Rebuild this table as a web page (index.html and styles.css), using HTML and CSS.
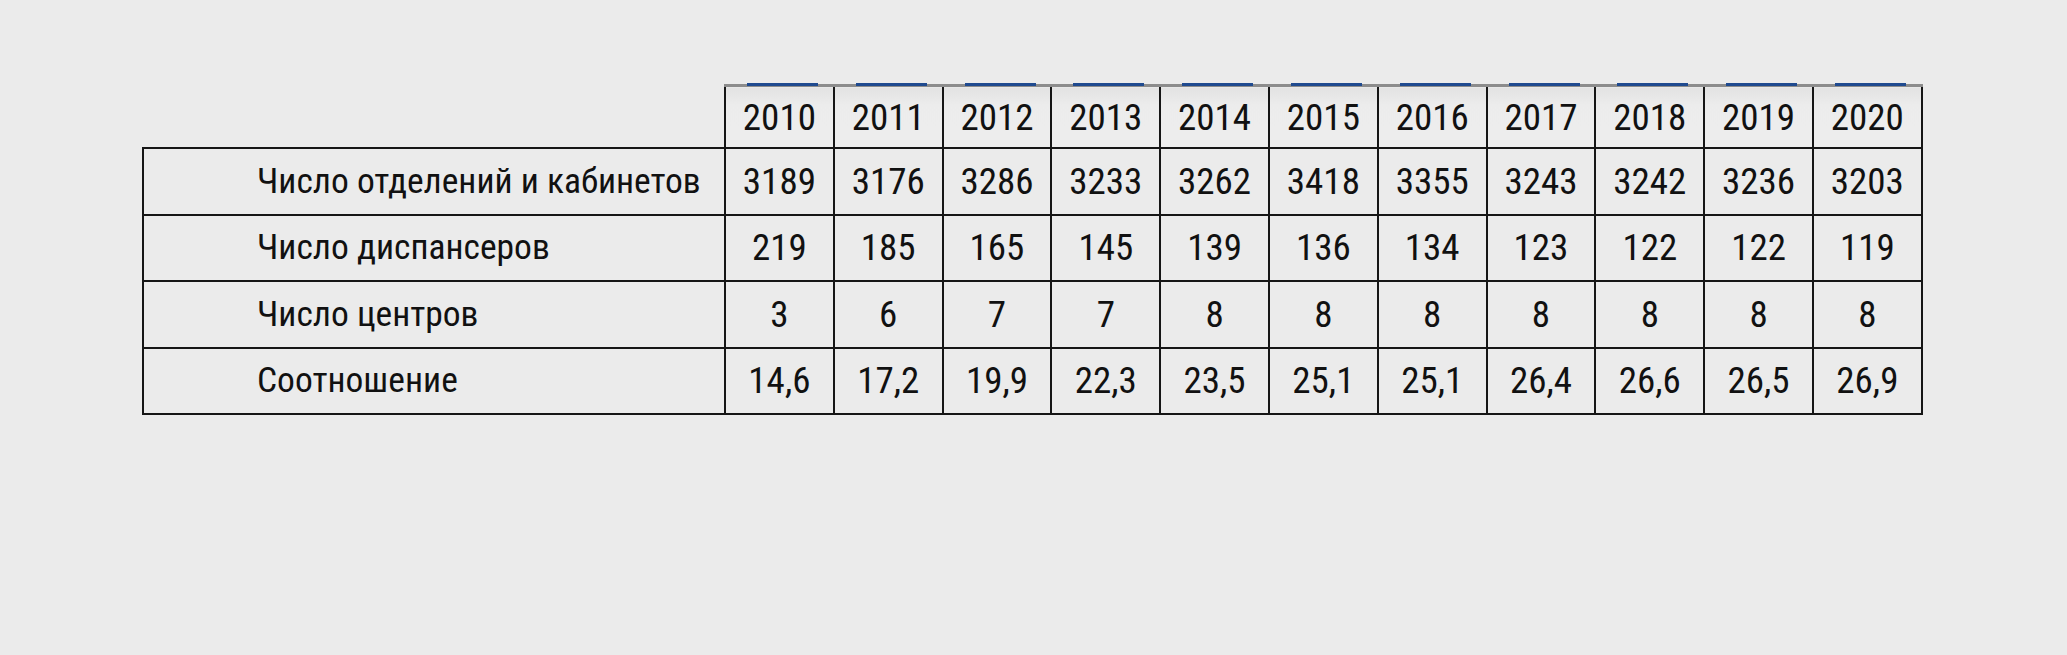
FILE: index.html
```html
<!DOCTYPE html>
<html lang="ru">
<head>
<meta charset="utf-8">
<title>Таблица</title>
<link rel="stylesheet" href="styles.css">
</head>
<body>
<div class="page">
  <table class="stats">
    <colgroup>
      <col class="col-label">
      <col class="col-year"><col class="col-year"><col class="col-year"><col class="col-year">
      <col class="col-year"><col class="col-year"><col class="col-year"><col class="col-year">
      <col class="col-year"><col class="col-year"><col class="col-year">
    </colgroup>
    <thead>
      <tr>
        <th class="corner"></th>
        <th class="year">2010</th><th class="year">2011</th><th class="year">2012</th><th class="year">2013</th>
        <th class="year">2014</th><th class="year">2015</th><th class="year">2016</th><th class="year">2017</th>
        <th class="year">2018</th><th class="year">2019</th><th class="year">2020</th>
      </tr>
    </thead>
    <tbody>
      <tr>
        <th class="label">Число отделений и кабинетов</th>
        <td>3189</td><td>3176</td><td>3286</td><td>3233</td><td>3262</td><td>3418</td>
        <td>3355</td><td>3243</td><td>3242</td><td>3236</td><td>3203</td>
      </tr>
      <tr>
        <th class="label">Число диспансеров</th>
        <td>219</td><td>185</td><td>165</td><td>145</td><td>139</td><td>136</td>
        <td>134</td><td>123</td><td>122</td><td>122</td><td>119</td>
      </tr>
      <tr>
        <th class="label">Число центров</th>
        <td>3</td><td>6</td><td>7</td><td>7</td><td>8</td><td>8</td>
        <td>8</td><td>8</td><td>8</td><td>8</td><td>8</td>
      </tr>
      <tr>
        <th class="label">Соотношение</th>
        <td>14,6</td><td>17,2</td><td>19,9</td><td>22,3</td><td>23,5</td><td>25,1</td>
        <td>25,1</td><td>26,4</td><td>26,6</td><td>26,5</td><td>26,9</td>
      </tr>
    </tbody>
  </table>
</div>
</body>
</html>
```
FILE: styles.css
```css
html, body {
  margin: 0;
  padding: 0;
  background: #ebebeb;
}

.page {
  padding: 84px 0 0 142px;
}

.stats {
  border-collapse: collapse;
  table-layout: fixed;
  width: 1779px;
  font-family: Roboto, "Open Sans", "Liberation Sans", sans-serif;
  font-stretch: 75%;
  font-size: 37px;
  color: #111;
}

.col-label { width: 582px; }
.col-year { width: 108.8px; }

.stats th,
.stats td {
  font-weight: normal;
  border: 2px solid #151515;
  padding: 0;
  height: 64.5px;
  text-align: center;
  vertical-align: middle;
  line-height: 1;
  white-space: nowrap;
}

.stats thead th {
  height: 60px;
}

.stats .corner {
  border-top: none;
  border-left: none;
}

.stats .year {
  position: relative;
  border-top: 3px solid #8c8c8c;
  background: linear-gradient(#e2e2e2, #ececec 30%, #ededed);
}

.stats .year::before {
  content: "";
  position: absolute;
  top: -4px;
  left: 21px;
  width: 71px;
  height: 3px;
  background: #1f4a8f;
}

.stats .label {
  text-align: left;
  padding-left: 113px;
  font-size: 35.5px;
}
```
